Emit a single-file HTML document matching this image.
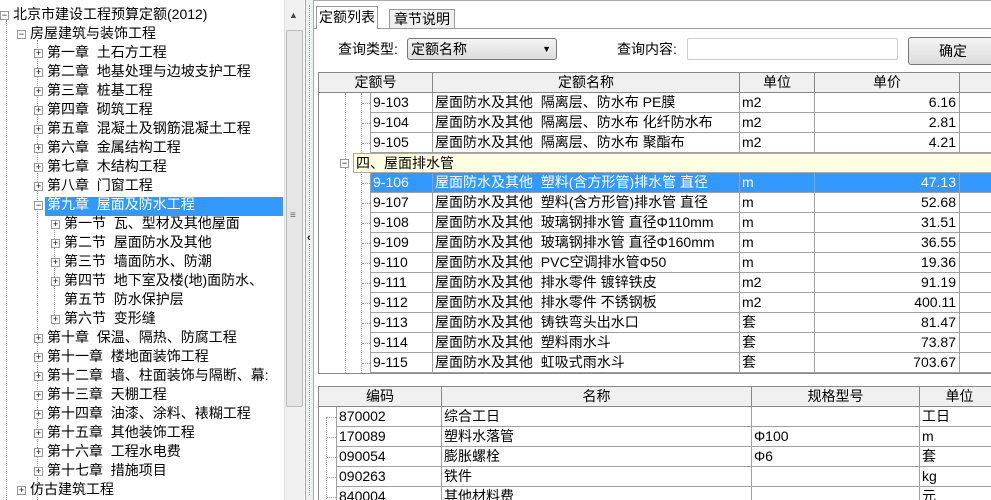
<!DOCTYPE html>
<html><head><meta charset="utf-8"><style>
*{margin:0;padding:0;box-sizing:border-box}
body{width:991px;height:500px;overflow:hidden;background:#fff;font:14px "Liberation Sans","Noto Sans CJK SC",sans-serif;color:#000;position:relative}
.a{position:absolute;white-space:nowrap}
.t{position:absolute;height:19px;line-height:19px;white-space:nowrap}
.bx{position:absolute;width:9px;height:9px;border:1px solid #999;background:#fff;font-size:9px;line-height:7px;text-align:center;color:#000}
.cell{position:absolute;height:20px;line-height:19px;border-right:1px solid #a0a0a0;border-bottom:1px solid #a0a0a0;padding-left:2px;white-space:nowrap;overflow:hidden}
.hd{position:absolute;height:20px;line-height:19px;background:#f0f0f0;border-right:1px solid #888;border-bottom:1px solid #888;text-align:center;white-space:nowrap;overflow:hidden}
.r{text-align:right;padding-right:3px}
.dot{position:absolute;border-left:1px dotted #999}
</style></head><body>
<div class="a" style="left:0;top:0;width:305px;height:500px;background:#fff"></div>
<div class="dot" style="left:6px;top:20px;height:480px"></div>
<div class="dot" style="left:37px;top:40px;height:460px"></div>
<div class="dot" style="left:54px;top:220px;height:105px"></div>
<div class="a" style="left:45px;top:197px;width:238px;height:19px;background:#3399ff"></div>
<div id="tree"></div>
<div class="a" style="left:284px;top:0;width:20px;height:500px;background:#f0f0f0;border-left:1px solid #e0e0e0"></div>
<div class="a" style="left:286px;top:30px;width:17px;height:377px;background:#e6e6e6;border:1px solid #bbb;border-radius:2px"></div>
<div class="a" style="left:289px;top:10px;font-size:9px;color:#444">▲</div>
<div class="a" style="left:290px;top:210px;font-size:10px;color:#666">≡</div>
<div class="a" style="left:305px;top:0;width:9px;height:500px;background:#f0f0f0;border-left:1px solid #aaa;border-right:1px solid #aaa"></div>
<div class="dot" style="left:309px;top:5px;height:490px;border-left:1px dotted #7aa"></div>
<div class="a" style="left:307px;top:232px;font-size:11px;font-weight:bold;background:#f0f0f0">‹</div>
<div class="a" style="left:314px;top:0;width:677px;height:500px;background:#fff;border-top:1px solid #aaa"></div>
<div class="a" style="left:314px;top:28px;width:677px;height:1px;background:#999"></div>
<div class="a" style="left:316px;top:6px;width:62px;height:23px;border:1px solid #999;border-bottom:none;background:#fff;line-height:20px;text-align:center">定额列表</div>
<div class="a" style="left:389px;top:9px;width:66px;height:20px;border:1px solid #999;background:#f0f0f0;line-height:18px;text-align:center">章节说明</div>
<div class="a" style="left:338px;top:39px;line-height:20px">查询类型:</div>
<div class="a" style="left:407px;top:38px;width:150px;height:22px;border:1px solid #777;border-radius:3px;background:linear-gradient(#f4f4f4,#dcdcdc);line-height:20px;padding-left:3px">定额名称<span style="position:absolute;right:5px;font-size:9px">▼</span></div>
<div class="a" style="left:617px;top:39px;line-height:20px">查询内容:</div>
<div class="a" style="left:687px;top:38px;width:211px;height:22px;border:1px solid #ccc;border-radius:2px"></div>
<div class="a" style="left:908px;top:37px;width:90px;height:28px;border:1px solid #777;border-radius:3px;background:linear-gradient(#f4f4f4,#dcdcdc);line-height:26px;padding-left:30px">确定</div>
<div class="a" style="left:318px;top:72px;width:673px;height:302px;border:1px solid #888;border-right:none;overflow:hidden" id="g1"></div>
<div class="a" style="left:318px;top:386px;width:673px;height:114px;border:1px solid #888;border-right:none;border-bottom:none;overflow:hidden" id="g2"></div>
<script>
var tr=[["北京市建设工程预算定额(2012)",0,"-"],["房屋建筑与装饰工程",1,"-"],["第一章  土石方工程",2,"+"],["第二章  地基处理与边坡支护工程",2,"+"],["第三章  桩基工程",2,"+"],["第四章  砌筑工程",2,"+"],["第五章  混凝土及钢筋混凝土工程",2,"+"],["第六章  金属结构工程",2,"+"],["第七章  木结构工程",2,"+"],["第八章  门窗工程",2,"+"],["第九章  屋面及防水工程",2,"-"],["第一节  瓦、型材及其他屋面",3,"+"],["第二节  屋面防水及其他",3,"+"],["第三节  墙面防水、防潮",3,"+"],["第四节  地下室及楼(地)面防水、",3,"+"],["第五节  防水保护层",3,""],["第六节  变形缝",3,"+"],["第十章  保温、隔热、防腐工程",2,"+"],["第十一章  楼地面装饰工程",2,"+"],["第十二章  墙、柱面装饰与隔断、幕:",2,"+"],["第十三章  天棚工程",2,"+"],["第十四章  油漆、涂料、裱糊工程",2,"+"],["第十五章  其他装饰工程",2,"+"],["第十六章  工程水电费",2,"+"],["第十七章  措施项目",2,"+"],["仿古建筑工程",1,"+"]];
var h="";var xs=[13,30,47,64];
tr.forEach(function(r,i){var y=6+19*i;var x=xs[r[1]];
 if(r[2])h+='<div class="bx" style="left:'+(x-13)+'px;top:'+(y+5)+'px">'+(r[2]=="+"?"+":"−")+'</div>';
 h+='<div class="t" style="left:'+x+'px;top:'+(y-1)+'px;color:'+(i==10?"#fff":"#000")+'">'+r[0].replace(/  /g,"&nbsp;&nbsp;")+'</div>';});
document.getElementById("tree").innerHTML=h;
var G=document.getElementById("g1");var s="";
s='<div class="hd" style="left:0;top:0;width:114px">定额号</div>';
s+='<div class="hd" style="left:114px;top:0;width:307px">定额名称</div><div class="hd" style="left:421px;top:0;width:75px">单位</div><div class="hd" style="left:496px;top:0;width:145px">单价</div><div class="hd" style="left:641px;top:0;width:40px"></div>';
var rows=[["9-103","屋面防水及其他  隔离层、防水布 PE膜","m2","6.16"],["9-104","屋面防水及其他  隔离层、防水布 化纤防水布","m2","2.81"],["9-105","屋面防水及其他  隔离层、防水布 聚酯布","m2","4.21"],null,["9-106","屋面防水及其他  塑料(含方形管)排水管 直径","m","47.13"],["9-107","屋面防水及其他  塑料(含方形管)排水管 直径","m","52.68"],["9-108","屋面防水及其他  玻璃钢排水管 直径Φ110mm","m","31.51"],["9-109","屋面防水及其他  玻璃钢排水管 直径Φ160mm","m","36.55"],["9-110","屋面防水及其他  PVC空调排水管Φ50","m","19.36"],["9-111","屋面防水及其他  排水零件 镀锌铁皮","m2","91.19"],["9-112","屋面防水及其他  排水零件 不锈钢板","m2","400.11"],["9-113","屋面防水及其他  铸铁弯头出水口","套","81.47"],["9-114","屋面防水及其他  塑料雨水斗","套","73.87"],["9-115","屋面防水及其他  虹吸式雨水斗","套","703.67"]];
s+='<div class="dot" style="left:26px;top:20px;height:280px"></div><div class="dot" style="left:42px;top:20px;height:280px"></div>';
rows.forEach(function(r,i){var y=20+20*i;
 if(!r){s+='<div class="bx" style="left:21px;top:'+(y+6)+'px">−</div><div class="cell" style="left:34px;top:'+y+'px;width:640px;background:#ffffe1;border:1px solid #aaa;padding-left:2px">四、屋面排水管</div>';return;}
 var sel=i==4;var st=sel?"background:#3399ff;color:#fff;":"";
 s+='<div class="a" style="left:43px;top:'+(y+10)+'px;width:8px;border-top:1px dotted #999"></div>';
 s+='<div class="cell" style="'+st+'left:51px;top:'+y+'px;width:63px;border-left:1px solid #a0a0a0">'+r[0]+'</div><div class="cell" style="'+st+'left:114px;top:'+y+'px;width:307px">'+r[1].replace(/  /g,"&nbsp;&nbsp;")+'</div><div class="cell" style="'+st+'left:421px;top:'+y+'px;width:75px">'+r[2]+'</div><div class="cell r" style="'+st+'left:496px;top:'+y+'px;width:145px">'+r[3]+'</div><div class="cell" style="'+st+'left:641px;top:'+y+'px;width:40px"></div>';});
G.innerHTML=s;
var G2=document.getElementById("g2");s='';
s+='<div class="hd" style="left:0;top:0;width:123px">编码</div><div class="hd" style="left:123px;top:0;width:310px">名称</div><div class="hd" style="left:433px;top:0;width:168px">规格型号</div><div class="hd" style="left:601px;top:0;width:80px">单位</div>';
var r2=[["870002","综合工日","","工日"],["170089","塑料水落管","Φ100","m"],["090054","膨胀螺栓","Φ6","套"],["090263","铁件","","kg"],["840004","其他材料费","","元"]];
s+='<div class="dot" style="left:7px;top:30px;height:90px"></div>';
r2.forEach(function(r,i){var y=20+20*i;
 s+='<div class="a" style="left:8px;top:'+(y+10)+'px;width:9px;border-top:1px dotted #999"></div>';
 s+='<div class="cell" style="left:17px;top:'+y+'px;width:106px;border-left:1px solid #a0a0a0">'+r[0]+'</div><div class="cell" style="left:123px;top:'+y+'px;width:310px">'+r[1]+'</div><div class="cell" style="left:433px;top:'+y+'px;width:168px">'+r[2]+'</div><div class="cell" style="left:601px;top:'+y+'px;width:80px">'+r[3]+'</div>';});
G2.innerHTML=s;
</script>
</body></html>
